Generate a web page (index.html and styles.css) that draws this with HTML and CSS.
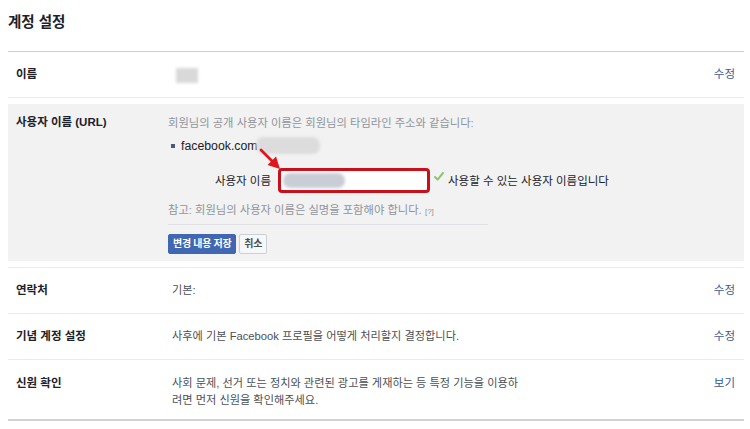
FILE: index.html
```html
<!DOCTYPE html>
<html lang="ko">
<head>
<meta charset="utf-8">
<title>계정 설정</title>
<link rel="stylesheet" href="styles.css">
</head>
<body>
<div class="page">
  <h1 class="title">계정 설정</h1>

  <div class="row">
    <div class="label">이름</div>
    <div class="value"><span class="blur blur-name"></span></div>
    <a class="action">수정</a>
  </div>

  <div class="panel-wrap">
    <div class="panel">
      <div class="label">사용자 이름 (URL)</div>
      <div class="panel-body">
        <p class="desc">회원님의 공개 사용자 이름은 회원님의 타임라인 주소와 같습니다:</p>
        <p class="url"><span class="bullet"></span>facebook.com<span class="blur blur-url"></span></p>
        <div class="field">
          <span class="field-label">사용자 이름</span>
          <span class="input"><span class="blur blur-input"></span></span>
          <svg class="check" width="10" height="9" viewBox="0 0 10 9">
            <path d="M1 5 L3.6 7.6 L9 1" fill="none" stroke="#8cc56f" stroke-width="2" stroke-linecap="round" stroke-linejoin="round"/>
          </svg>
          <span class="ok">사용할 수 있는 사용자 이름입니다</span>
          <svg class="arrow" width="26" height="26" viewBox="0 0 26 26">
            <path d="M2 2 L14 14" stroke="#e0141e" stroke-width="2.8" stroke-linecap="round"/>
            <path d="M21 21 L8.5 17 L17 8.5 Z" fill="#e0141e"/>
          </svg>
        </div>
        <p class="note">참고: 회원님의 사용자 이름은 실명을 포함해야 합니다. <span class="help">[?]</span></p>
        <div class="buttons">
          <button class="btn btn-primary">변경 내용 저장</button>
          <button class="btn">취소</button>
        </div>
      </div>
    </div>
  </div>

  <div class="row">
    <div class="label">연락처</div>
    <div class="value">기본:</div>
    <a class="action">수정</a>
  </div>

  <div class="row">
    <div class="label">기념 계정 설정</div>
    <div class="value">사후에 기본 Facebook 프로필을 어떻게 처리할지 결정합니다.</div>
    <a class="action">수정</a>
  </div>

  <div class="row row-top row-last">
    <div class="label">신원 확인</div>
    <div class="value">사회 문제, 선거 또는 정치와 관련된 광고를 게재하는 등 특정 기능을 이용하<br>려면 먼저 신원을 확인해주세요.</div>
    <a class="action">보기</a>
  </div>
</div>
</body>
</html>
```

FILE: styles.css
```css
* { box-sizing: border-box; }
body {
  margin: 0;
  background: #fff;
  font-family: "Liberation Sans", "Noto Sans CJK KR", sans-serif;
  color: #1d2129;
}
.page {
  width: 736px;
  margin-left: 8px;
}
.title {
  margin: 0;
  height: 52px;
  padding-top: 12px;
  font-size: 14.5px;
  line-height: 20px;
  font-weight: bold;
  border-bottom: 1px solid #cfcfcf;
}
.row {
  display: grid;
  grid-template-columns: 152px 1fr auto;
  align-items: center;
  height: 46px;
  padding: 0 9px 0 8px;
  border-bottom: 1px solid #ebebeb;
}
.row-top {
  align-items: start;
  height: 61px;
  padding-top: 15px;
}
.row-last {
  border-bottom: 2px solid #d2d2d2;
}
.label {
  font-size: 11.5px;
  font-weight: bold;
  line-height: 17px;
  color: #1d2129;
}
.value {
  font-size: 11.2px;
  line-height: 17px;
  color: #4b4f56;
  padding-left: 4px;
}
.action {
  font-size: 11.5px;
  line-height: 17px;
  color: #365899;
}
.blur {
  display: inline-block;
  background: #d6d6d6;
  filter: blur(1.5px);
  vertical-align: middle;
}
.blur-name {
  width: 22px;
  height: 15px;
  margin-left: 4px;
  background: #d9d9d9;
}
.panel-wrap {
  padding: 6px 0;
  border-bottom: 1px solid #ebebeb;
}
.panel {
  display: grid;
  grid-template-columns: 152px 1fr;
  background: #f2f2f2;
  height: 157px;
  padding: 10px 8px 0 8px;
}
.panel-body {
  display: flex;
  flex-direction: column;
  padding-top: 1px;
}
.panel-body p { margin: 0; }
.desc {
  font-size: 11.3px;
  line-height: 16px;
  color: #90949c;
}
.url {
  display: flex;
  align-items: center;
  margin-top: 6px !important;
  font-size: 12.3px;
  line-height: 16px;
  color: #1d2129;
}
.bullet {
  width: 4px;
  height: 4px;
  background: #4b5a78;
  margin: 0 6px 0 3px;
}
.blur-url {
  width: 64px;
  height: 17px;
  border-radius: 8px;
  margin-left: -2px;
  background: #dcdcdc;
}
.field {
  position: relative;
  display: flex;
  align-items: center;
  margin-top: 14px;
  height: 24px;
}
.field-label {
  width: 103px;
  text-align: right;
  font-size: 11.5px;
  color: #1d2129;
}
.input {
  display: flex;
  align-items: center;
  width: 152px;
  height: 25px;
  margin-left: 7px;
  background: #fff;
  border: 3px solid #c8101c;
  border-radius: 4px;
  padding-left: 2px;
}
.blur-input {
  width: 62px;
  height: 15px;
  border-radius: 7px;
  background: #c9ced6;
}
.check {
  margin: -7px 4px 0 4px;
}
.ok {
  font-size: 11.5px;
  color: #1d2129;
}
.arrow {
  position: absolute;
  left: 91px;
  top: -20px;
}
.note {
  margin-top: 10px !important;
  width: 320px;
  padding-bottom: 4px;
  border-bottom: 1px solid #dddfe2;
  font-size: 11.3px;
  line-height: 16px;
  color: #90949c;
}
.help { font-size: 8px; }
.buttons {
  display: flex;
  gap: 3px;
  margin-top: 9px;
}
.btn {
  height: 20px;
  padding: 0 4px;
  font-family: inherit;
  font-size: 10px;
  font-weight: bold;
  line-height: 18px;
  letter-spacing: -0.3px;
  border: 1px solid #ccd0d5;
  border-radius: 2px;
  background: #f6f7f9;
  color: #4b4f56;
}
.btn-primary {
  background: #4267b2;
  border-color: #4267b2;
  color: #fff;
}
```
